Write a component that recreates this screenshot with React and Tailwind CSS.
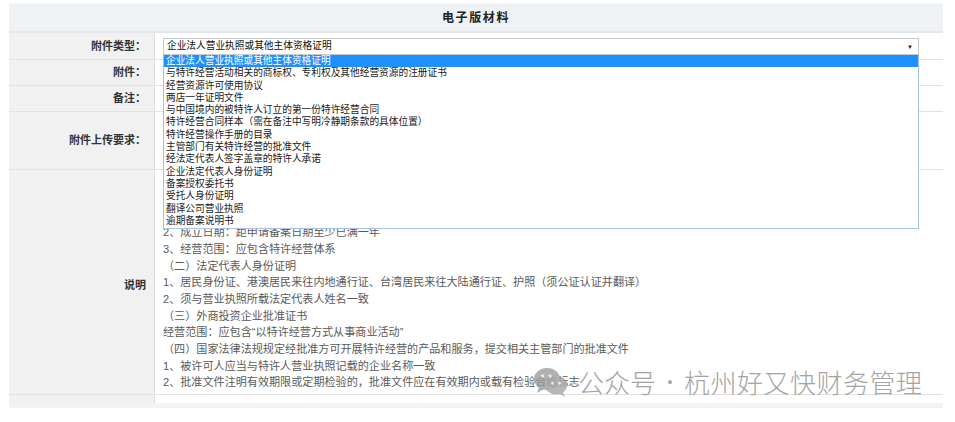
import React from 'react';

// 电子版材料：附件类型下拉展开时的材料表单
const OPTIONS = [
  '企业法人营业执照或其他主体资格证明',
  '与特许经营活动相关的商标权、专利权及其他经营资源的注册证书',
  '经营资源许可使用协议',
  '两店一年证明文件',
  '与中国境内的被特许人订立的第一份特许经营合同',
  '特许经营合同样本（需在备注中写明冷静期条款的具体位置）',
  '特许经营操作手册的目录',
  '主管部门有关特许经营的批准文件',
  '经法定代表人签字盖章的特许人承诺',
  '企业法定代表人身份证明',
  '备案授权委托书',
  '受托人身份证明',
  '翻译公司营业执照',
  '逾期备案说明书',
];

const NOTES = [
  '备案材料说明：',
  '（一）企业法人营业执照或其他主体资格证明',
  '1、主体资格：特许人应当为企业法人',
  '2、成立日期：距申请备案日期至少已满一年',
  '3、经营范围：应包含特许经营体系',
  '（二）法定代表人身份证明',
  '1、居民身份证、港澳居民来往内地通行证、台湾居民来往大陆通行证、护照（须公证认证并翻译）',
  '2、须与营业执照所载法定代表人姓名一致',
  '（三）外商投资企业批准证书',
  '经营范围：应包含“以特许经营方式从事商业活动”',
  '（四）国家法律法规规定经批准方可开展特许经营的产品和服务，提交相关主管部门的批准文件',
  '1、被许可人应当与特许人营业执照记载的企业名称一致',
  '2、批准文件注明有效期限或定期检验的，批准文件应在有效期内或载有检验合格标志',
];

function Row({ label, height, children, labelClass = '' }) {
  return (
    <div className="grid grid-cols-[146px_1fr] border-b border-[#e2e2e2]" style={{ height }}>
      <div className={`flex items-center justify-end pr-[8px] bg-[#f1f1f1] border-r border-[#dddddd] text-[11px] font-semibold text-[#333] ${labelClass}`}>
        {label}
      </div>
      <div className="relative bg-white">{children}</div>
    </div>
  );
}

function WechatMark() {
  return (
    <svg width="36" height="30" viewBox="0 0 36 30">
      <ellipse cx="14" cy="12" rx="13" ry="11" fill="#9a9a9a" opacity="0.85" />
      <path d="M6 20 L4 26 L11 22 Z" fill="#9a9a9a" opacity="0.85" />
      <ellipse cx="23" cy="18" rx="11" ry="9.5" fill="#a8a8a8" opacity="0.9" />
      <path d="M30 25 L32 30 L26 26.5 Z" fill="#a8a8a8" opacity="0.9" />
      <circle cx="9.5" cy="9" r="1.8" fill="#e6e6e6" />
      <circle cx="17" cy="9" r="1.8" fill="#e6e6e6" />
      <circle cx="19.5" cy="16" r="1.5" fill="#f0f0f0" />
      <circle cx="26.5" cy="16" r="1.5" fill="#f0f0f0" />
    </svg>
  );
}

export default function App() {
  return (
    <div className="relative w-[955px] h-[422px] overflow-hidden bg-white pt-[3px] pl-[9px] font-['Liberation_Sans','Noto_Sans_CJK_SC',sans-serif]">
      <div className="w-[934px]">
        <div className="h-[30px] flex items-center justify-center bg-[#eef2f5] border-t border-[#f6f8fa] border-b-2 border-b-[#e3e6ea] text-[12px] font-bold tracking-[1.6px] text-[#222]">
          电子版材料
        </div>

        <Row label="附件类型：" height={27}>
          <div className="absolute left-[8px] top-[5px] w-[756px] z-10">
            <div className="h-[17px] flex items-center justify-between pl-[3px] pr-[5px] border border-[#c9c9c9] bg-white text-[9.7px] text-[#111]">
              <span>企业法人营业执照或其他主体资格证明</span>
              <span className="text-[6px] leading-none text-[#222]">▼</span>
            </div>
            <ul className="h-[174px] border border-[#a9c1e9] border-t-0 bg-white text-[9.7px] leading-[12.3px] text-[#1a1a1a]">
              {OPTIONS.map((o, i) => (
                <li
                  key={o}
                  className={i === 0 ? 'pl-[2px] bg-[#1e90ff] text-white' : 'pl-[2px]'}
                >
                  {o}
                </li>
              ))}
            </ul>
          </div>
        </Row>
        <Row label="附件：" height={26} />
        <Row label="备注：" height={26} />
        <Row label="附件上传要求：" height={58} />

        <Row label="说明" height={225} labelClass="pt-[6px]">
          <div className="pt-[4px] pl-[8px] text-[11.1px] leading-[16.7px] text-[#5a5a5a]">
            {NOTES.map((n) => (
              <div key={n} className="whitespace-nowrap">{n}</div>
            ))}
          </div>
        </Row>

        <div className="grid grid-cols-[146px_1fr] h-[8px]">
          <div className="bg-[#f1f1f1] border-r border-[#dddddd]" />
          <div className="bg-white" />
        </div>
        <div className="h-[5px] bg-[#f3f3f3]" />
      </div>

      {/* 公众号水印 */}
      <div className="absolute left-[533px] top-[366px] flex items-center gap-[9px] text-[#9b9b9b] opacity-90">
        <WechatMark />
        <div className="flex items-center text-[26px] leading-[32px] font-['Noto_Sans_CJK_SC',sans-serif] font-light whitespace-nowrap">
          <span>公众号</span>
          <span className="w-[28px] text-center text-[20px]">·</span>
          <span className="tracking-[0.5px]">杭州好又快财务管理</span>
        </div>
      </div>
    </div>
  );
}
